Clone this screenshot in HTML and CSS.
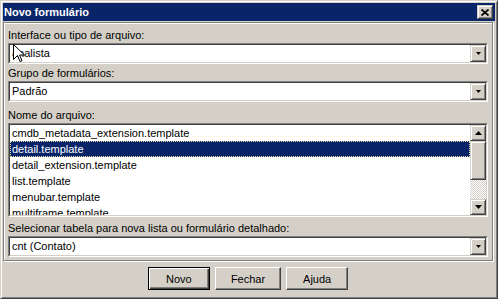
FILE: index.html
```html
<!DOCTYPE html>
<html lang="pt-BR">
<head>
    <meta charset="UTF-8">
    <meta name="viewport" content="width=device-width, initial-scale=1.0">
    <title>Novo formulário</title>
    <link rel="stylesheet" href="styles.css">
</head>
<body>

    <div class="window">
        <div class="titlebar">
            <span class="title">Novo formulário</span>
            <div class="close-btn">
                <svg width="8" height="7" viewBox="0 0 8 7"><path d="M0.5 0.5 L7.5 6.5 M7.5 0.5 L0.5 6.5" stroke="#000" stroke-width="1.7" fill="none"/></svg>
            </div>
        </div>

        <div class="panel">
            <div class="field-label first">Interface ou tipo de arquivo:</div>
            <div class="combo">
                <div class="combo-inner">
                    <span class="combo-text">analista</span>
                    <span class="drop-btn"><svg width="5" height="3" viewBox="0 0 5 3"><path d="M0 0h5L2.5 3z" fill="#000"/></svg></span>
                </div>
            </div>

            <div class="field-label">Grupo de formulários:</div>
            <div class="combo">
                <div class="combo-inner">
                    <span class="combo-text">Padrão</span>
                    <span class="drop-btn"><svg width="5" height="3" viewBox="0 0 5 3"><path d="M0 0h5L2.5 3z" fill="#000"/></svg></span>
                </div>
            </div>

            <div class="field-label spaced">Nome do arquivo:</div>
            <div class="listbox">
                <div class="listbox-inner">
                    <ul class="items">
                        <li>cmdb_metadata_extension.template</li>
                        <li class="selected">detail.template</li>
                        <li>detail_extension.template</li>
                        <li>list.template</li>
                        <li>menubar.template</li>
                        <li>multiframe.template</li>
                    </ul>
                    <div class="scrollbar">
                        <span class="scroll-btn"><svg width="7" height="4" viewBox="0 0 7 4"><path d="M3.5 0L7 4H0z" fill="#000"/></svg></span>
                        <span class="thumb"></span>
                        <span class="track"></span>
                        <span class="scroll-btn"><svg width="7" height="4" viewBox="0 0 7 4"><path d="M0 0h7L3.5 4z" fill="#000"/></svg></span>
                    </div>
                </div>
            </div>

            <div class="field-label mid">Selecionar tabela para nova lista ou formulário detalhado:</div>
            <div class="combo">
                <div class="combo-inner">
                    <span class="combo-text">cnt (Contato)</span>
                    <span class="drop-btn"><svg width="5" height="3" viewBox="0 0 5 3"><path d="M0 0h5L2.5 3z" fill="#000"/></svg></span>
                </div>
            </div>
        </div>

        <div class="actions">
            <button class="btn default">Novo</button>
            <button class="btn">Fechar</button>
            <button class="btn">Ajuda</button>
        </div>

        <!-- mouse pointer sitting over the first field -->
        <svg class="pointer" width="12" height="19" viewBox="0 0 12 19">
            <path d="M0.5 0.5 L0.5 15.5 L4.5 11.5 L7 17.5 L9 16.7 L6.6 11 L11.5 11 Z" fill="#fff" stroke="#000" stroke-width="1"/>
        </svg>
    </div>

</body>
</html>
```

FILE: styles.css
```css
body {
    margin: 0;
    font-family: "Liberation Sans", Arial, sans-serif;
    font-size: 11px;
    color: #000;
    background-color: #d4d0c8;
}
.window {
    position: relative;
    box-sizing: border-box;
    width: 498px;
    height: 299px;
    padding: 2px;
    background-color: #d4d0c8;
    border: 1px solid;
    border-color: #d4d0c8 #404040 #404040 #d4d0c8;
    box-shadow: inset 1px 1px 0 #fff, inset -1px -1px 0 #808080;
    overflow: hidden;
}
.titlebar {
    display: flex;
    justify-content: space-between;
    align-items: center;
    height: 18px;
    padding: 0 2px 0 1px;
    margin-bottom: 1px;
    background-color: #0a246a;
}
.title {
    color: #fff;
    font-weight: bold;
    line-height: 18px;
}
.close-btn {
    box-sizing: border-box;
    display: flex;
    justify-content: center;
    align-items: center;
    width: 16px;
    height: 14px;
    background-color: #d4d0c8;
    border: 1px solid;
    border-color: #d4d0c8 #404040 #404040 #d4d0c8;
    box-shadow: inset 1px 1px 0 #fff, inset -1px -1px 0 #808080;
}

/* etched frame around the form */
.panel {
    box-sizing: border-box;
    margin-right: 2px;
    padding: 0 4px 3px 4px;
    border: 1px solid #808080;
    box-shadow: inset 1px 1px 0 #fff, 1px 1px 0 #fff;
}
.field-label {
    line-height: 13px;
    padding-top: 3px;
    padding-bottom: 1px;
    white-space: nowrap;
}
.field-label.first {
    padding-top: 6px;
}
.field-label.spaced {
    padding-top: 7px;
}
.field-label.mid {
    padding-top: 5px;
}

/* sunken fields: two nested 1px borders */
.combo,
.listbox {
    border: 1px solid;
    border-color: #808080 #fff #fff #808080;
}
.combo-inner,
.listbox-inner {
    display: flex;
    background-color: #fff;
    border: 1px solid;
    border-color: #404040 #d4d0c8 #d4d0c8 #404040;
}
.combo-inner {
    height: 17px;
}
.combo-text {
    flex: 1;
    padding-left: 2px;
    line-height: 17px;
    white-space: nowrap;
}
.drop-btn,
.scroll-btn,
.thumb {
    box-sizing: border-box;
    display: flex;
    justify-content: center;
    align-items: center;
    background-color: #d4d0c8;
    border: 1px solid;
    border-color: #d4d0c8 #404040 #404040 #d4d0c8;
    box-shadow: inset 1px 1px 0 #fff, inset -1px -1px 0 #808080;
}
.drop-btn {
    width: 16px;
    height: 17px;
}

.listbox-inner {
    height: 90px;
}
.items {
    flex: 1;
    list-style: none;
    margin: 0;
    padding: 0;
    overflow: hidden;
}
.items li {
    height: 16px;
    line-height: 16px;
    padding-left: 2px;
    white-space: nowrap;
}
.items li.selected {
    background-color: #0a246a;
    color: #fff;
    outline: 1px dotted #e8e4a8;
    outline-offset: -1px;
}
.scrollbar {
    display: flex;
    flex-direction: column;
    width: 16px;
}
.scroll-btn {
    height: 16px;
}
.thumb {
    height: 39px;
}
.track {
    flex: 1;
    background: repeating-conic-gradient(#fff 0 25%, #d4d0c8 0 50%) 0 0 / 2px 2px;
}

/* dialog buttons */
.actions {
    display: flex;
    justify-content: center;
    gap: 5px;
    margin-top: 6px;
    padding-right: 2px;
}
.btn {
    box-sizing: border-box;
    min-width: 62px;
    height: 23px;
    padding: 0 15px;
    font-family: inherit;
    font-size: 11px;
    color: #000;
    background-color: #d4d0c8;
    border: 1px solid;
    border-color: #fff #404040 #404040 #fff;
    box-shadow: inset -1px -1px 0 #808080;
    border-radius: 0;
}
.btn.default {
    border-color: #000;
    box-shadow: inset 1px 1px 0 #fff, inset -1px -1px 0 #404040, inset -2px -2px 0 #808080;
}

.pointer {
    position: absolute;
    left: 12px;
    top: 43px;
}
```
